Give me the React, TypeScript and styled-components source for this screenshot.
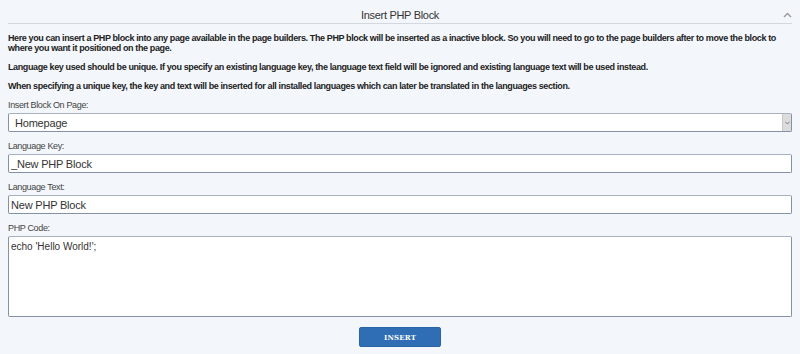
import styled, { createGlobalStyle } from "styled-components";

const GlobalStyle = createGlobalStyle`
  html, body {
    margin: 0;
    padding: 0;
    background: #f3f6fa;
    font-family: "Liberation Sans", Arial, sans-serif;
  }
  * {
    box-sizing: border-box;
  }
`;

const Wrapper = styled.div`
  padding: 0 8px;
  width: 800px;
  height: 354px;
  overflow: hidden;
`;

const Header = styled.div`
  position: relative;
  height: 24px;
  border-bottom: 1px solid #d3d8de;
  display: flex;
  align-items: center;
  justify-content: center;
  padding-top: 6px;
`;

const Title = styled.h2`
  margin: 0;
  font-size: 11px;
  font-weight: 400;
  letter-spacing: -0.3px;
  color: #333;
`;

const Chevron = styled.svg`
  position: absolute;
  right: 0;
  top: 12px;
  width: 9px;
  height: 6px;
`;

const Intro = styled.div`
  padding-top: 9px;
  p {
    margin: 0 0 9px;
    font-size: 9px;
    font-weight: 700;
    line-height: 10px;
    letter-spacing: -0.38px;
    color: #222;
  }
`;

const Field = styled.div`
  display: flex;
  flex-direction: column;
  margin-bottom: 9px;
`;

const Label = styled.label`
  font-size: 9px;
  letter-spacing: -0.35px;
  color: #444;
  margin-bottom: 3px;
`;

const boxStyle = `
  width: 100%;
  background: #fff;
  border: 1px solid #8592a6;
  border-top-color: #a7b1c0;
  border-radius: 2px;
  font-family: "Liberation Sans", Arial, sans-serif;
  font-size: 11px;
  letter-spacing: -0.2px;
  color: #333;
`;

const SelectBox = styled.div`
  ${boxStyle}
  height: 19px;
  display: flex;
  align-items: center;
  padding-left: 6px;
  position: relative;
`;

const SelectArrow = styled.span`
  position: absolute;
  right: 0;
  top: 0;
  bottom: 0;
  width: 9px;
  background: #dcdcdc;
  border-left: 1px solid #c8c8c8;
  display: flex;
  align-items: center;
  justify-content: center;
`;

const Input = styled.input`
  ${boxStyle}
  height: 19px;
  padding: 0 2px;
  outline: none;
`;

const TextArea = styled.textarea`
  ${boxStyle}
  height: 81px;
  padding: 4px 2px;
  font-size: 10px;
  letter-spacing: 0;
  resize: none;
  outline: none;
`;

const Actions = styled.div`
  display: flex;
  justify-content: center;
  padding-top: 1px;
`;

const Button = styled.button`
  width: 82px;
  height: 20px;
  background: #2f6db5;
  border: 1px solid #2a64a8;
  border-radius: 2px;
  color: #fff;
  font-family: "DejaVu Serif", serif;
  font-size: 7px;
  font-weight: 700;
  letter-spacing: 0.2px;
`;

export default function App() {
  return (
    <Wrapper>
      <GlobalStyle />
      <Header>
        <Title>Insert PHP Block</Title>
        <Chevron viewBox="0 0 9 6">
          <path d="M1 5 L4.5 1.5 L8 5" fill="none" stroke="#999" strokeWidth="1.4" />
        </Chevron>
      </Header>
      <Intro>
        <p>
          Here you can insert a PHP block into any page available in the page builders. The PHP block will be
          inserted as a inactive block. So you will need to go to the page builders after to move the block to
          where you want it positioned on the page.
        </p>
        <p>
          Language key used should be unique. If you specify an existing language key, the language text field
          will be ignored and existing language text will be used instead.
        </p>
        <p>
          When specifying a unique key, the key and text will be inserted for all installed languages which can
          later be translated in the languages section.
        </p>
      </Intro>
      <Field>
        <Label>Insert Block On Page:</Label>
        <SelectBox>
          Homepage
          <SelectArrow>
            <svg width="5" height="4" viewBox="0 0 5 4">
              <path d="M0.5 0.8 L2.5 3 L4.5 0.8" fill="none" stroke="#777" strokeWidth="0.9" />
            </svg>
          </SelectArrow>
        </SelectBox>
      </Field>
      <Field>
        <Label>Language Key:</Label>
        <Input defaultValue="_New PHP Block" />
      </Field>
      <Field>
        <Label>Language Text:</Label>
        <Input defaultValue="New PHP Block" />
      </Field>
      <Field>
        <Label>PHP Code:</Label>
        <TextArea defaultValue="echo 'Hello World!';" />
      </Field>
      <Actions>
        <Button>INSERT</Button>
      </Actions>
    </Wrapper>
  );
}
